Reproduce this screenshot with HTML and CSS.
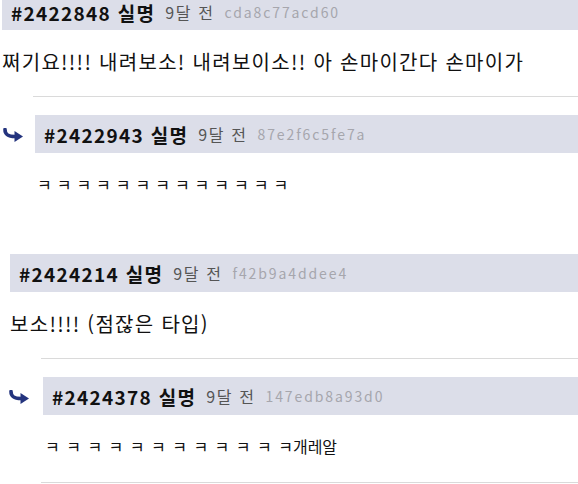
FILE: index.html
```html
<!DOCTYPE html>
<html lang="ko">

<head>
    <meta charset="UTF-8">
    <meta name="viewport" content="width=device-width, initial-scale=1.0">
    <title>댓글</title>
    <link rel="stylesheet" href="styles.css">
</head>

<body>
    <div class="thread thread-first">
        <div class="comment">
            <div class="comment-head">
                <span class="num">#2422848 실명</span>
                <span class="time">9달 전</span>
                <span class="hash">cda8c77acd60</span>
            </div>
            <div class="comment-body">쩌기요!!!! 내려보소! 내려보이소!! 아 손마이간다 손마이가</div>
        </div>
        <div class="replies">
            <div class="reply">
                <svg class="reply-icon" width="24" height="14" viewBox="0 0 24 14">
                    <path d="M3 1.5 C3 6.5, 6 8.5, 13 8.5" fill="none" stroke="#24347e" stroke-width="3.6" stroke-linecap="round"/>
                    <path d="M12.5 3 L21 8.5 L12.5 14 Z" fill="#24347e"/>
                </svg>
                <div class="comment-head">
                    <span class="num">#2422943 실명</span>
                    <span class="time">9달 전</span>
                    <span class="hash">87e2f6c5fe7a</span>
                </div>
                <div class="comment-body">ㅋ ㅋ ㅋ ㅋ ㅋ ㅋ ㅋ ㅋ ㅋ ㅋ ㅋ ㅋ ㅋ</div>
            </div>
        </div>
    </div>

    <div class="thread thread-second">
        <div class="comment">
            <div class="comment-head">
                <span class="num">#2424214 실명</span>
                <span class="time">9달 전</span>
                <span class="hash">f42b9a4ddee4</span>
            </div>
            <div class="comment-body">보소!!!! (점잖은 타입)</div>
        </div>
        <div class="replies">
            <div class="reply reply-last">
                <svg class="reply-icon" width="24" height="14" viewBox="0 0 24 14">
                    <path d="M3 1.5 C3 6.5, 6 8.5, 13 8.5" fill="none" stroke="#24347e" stroke-width="3.6" stroke-linecap="round"/>
                    <path d="M12.5 3 L21 8.5 L12.5 14 Z" fill="#24347e"/>
                </svg>
                <div class="comment-head">
                    <span class="num">#2424378 실명</span>
                    <span class="time">9달 전</span>
                    <span class="hash">147edb8a93d0</span>
                </div>
                <div class="comment-body">ㅋ ㅋ ㅋ ㅋ ㅋ ㅋ ㅋ ㅋ ㅋ ㅋ ㅋ ㅋ개레알</div>
            </div>
        </div>
    </div>
</body>

</html>
```

FILE: styles.css
```css
body {
    font-family: "Noto Sans CJK KR", "Noto Sans", sans-serif;
    background-color: #fff;
    color: #111;
    margin: 0;
    padding: 0;
    height: 484px;
    overflow: hidden;
}

.thread {
    margin-bottom: 34px;
}

.thread-first {
    margin-top: -6px;
    padding-left: 2px;
}

.thread-second {
    padding-left: 10px;
}

.comment-head {
    background-color: #dcdee9;
    height: 38px;
    padding-left: 9px;
    display: flex;
    align-items: center;
    gap: 10px;
    white-space: nowrap;
}

.thread-first > .comment > .comment-head {
    height: 36px;
}

.num {
    font-size: 19px;
    font-weight: bold;
    color: #111;
    letter-spacing: 1.3px;
}

.time {
    font-size: 16px;
    color: #555;
    letter-spacing: 1.6px;
}

.hash {
    font-size: 14px;
    color: #a6a6ad;
    letter-spacing: 1.9px;
}

.comment-body {
    font-size: 20px;
    line-height: 24px;
    padding: 20px 0 22px;
    letter-spacing: 1.3px;
    white-space: nowrap;
}

.replies {
    margin-left: 31px;
    border-top: 1px solid #dadada;
    padding-top: 18px;
}

.reply {
    position: relative;
    margin-left: 2px;
}

.reply .comment-body {
    font-size: 16px;
    padding: 19px 0 24px 2px;
    letter-spacing: 0;
    word-spacing: 0.5px;
}

.reply-last {
    border-bottom: 1px solid #dadada;
    margin-left: 0;
    padding-left: 2px;
}

.reply-last .comment-body {
    word-spacing: 2px;
}

.reply-icon {
    position: absolute;
    left: -33px;
    top: 13px;
}
```
